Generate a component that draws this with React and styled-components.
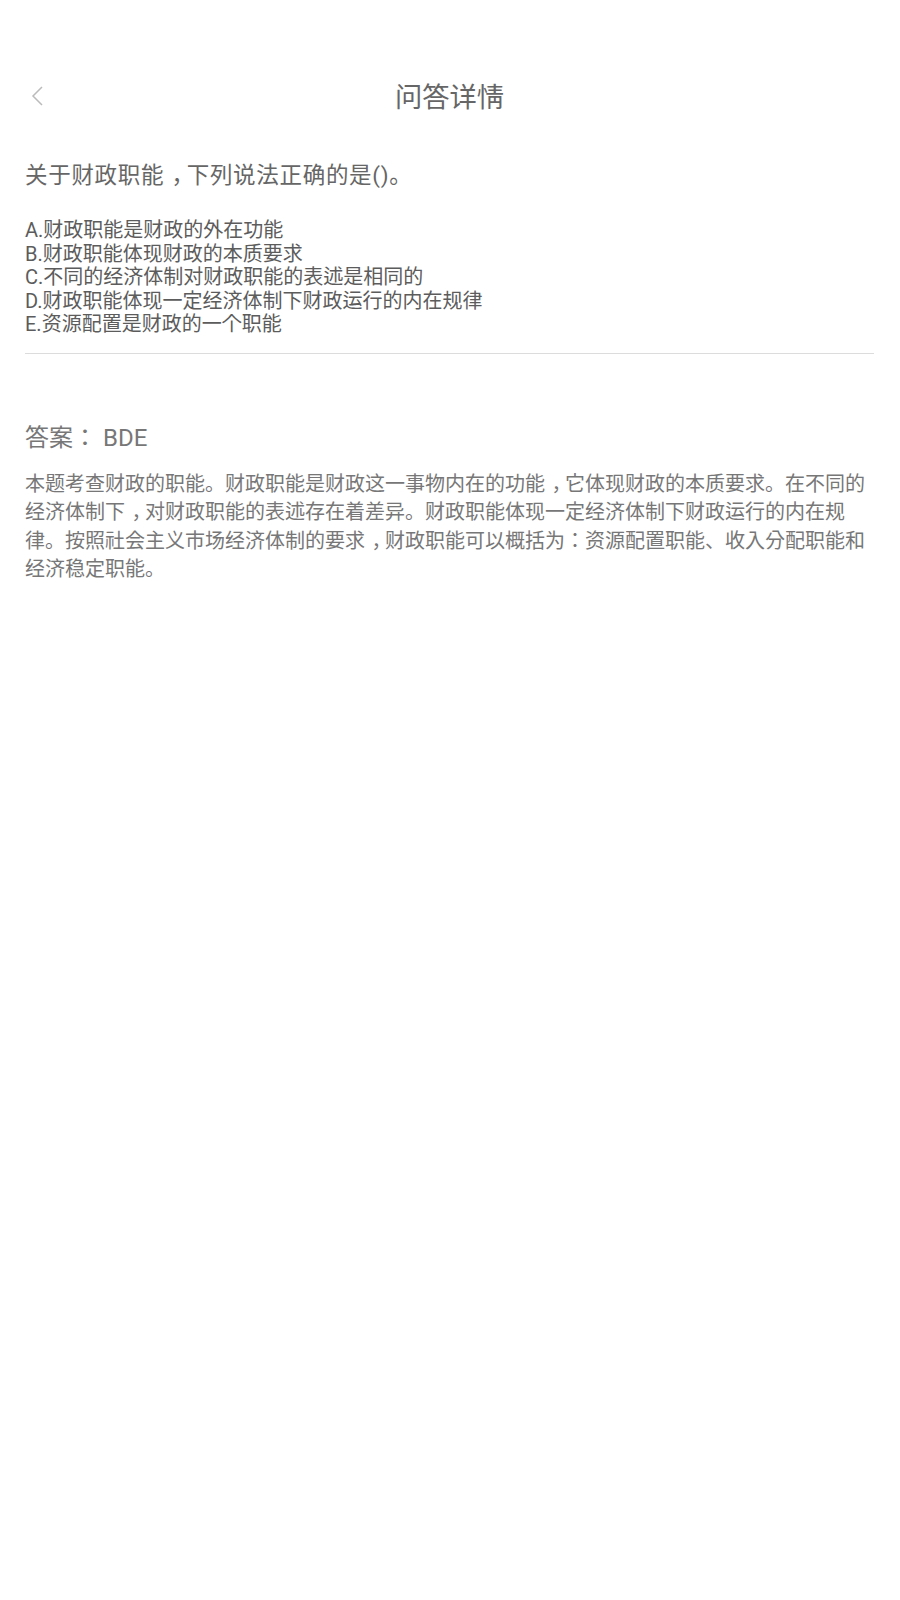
import React from "react";
import styled, { createGlobalStyle } from "styled-components";

const Global = createGlobalStyle`
  html, body { margin: 0; padding: 0; background: #ffffff; }
  body { font-family: Roboto, "Noto Sans CJK KR", sans-serif; }
`;

const Page = styled.div`
  width: 100%;
  background: #fff;
  box-sizing: border-box;
  padding: 0 26px 40px 25px;
  color: #666;
`;

const Header = styled.header`
  display: grid;
  grid-template-columns: 40px 1fr 40px;
  align-items: start;
  padding-top: 79px;
`;

const Back = styled.button`
  border: 0;
  background: none;
  padding: 0;
  margin: 7px 0 0 6px;
  width: 12px;
  height: 20px;
  display: flex;
  align-items: center;
  cursor: pointer;
`;

const Title = styled.h1`
  margin: 0;
  text-align: center;
  font-size: 27.3px;
  font-weight: 400;
  line-height: 38px;
  color: #666;
`;

const Question = styled.div`
  font-size: 22.5px;
  letter-spacing: 0.7px;
  line-height: 30px;
  margin-top: 43px;
  color: #666;
`;

const Options = styled.div`
  margin-top: 29px;
  padding-bottom: 16px;
  border-bottom: 1px solid #dcdcdc;
`;

const Option = styled.div`
  font-size: 20px;
  line-height: 23.5px;
  color: #5c5c5c;
`;

const Answer = styled.div`
  margin-top: 69px;
  font-size: 24px;
  line-height: 30px;
  color: #777;
`;

const Explain = styled.p`
  margin: 17px 0 0;
  font-size: 20px;
  line-height: 28.5px;
  color: #777;
`;

const Comma = styled.span`
  padding-left: 0.32em;
  letter-spacing: -0.32em;
`;

const withCommas = (text) =>
  text.split("，").flatMap((part, i) =>
    i === 0 ? [part] : [<Comma key={i}>，</Comma>, part]
  );

const options = [
  "A.财政职能是财政的外在功能",
  "B.财政职能体现财政的本质要求",
  "C.不同的经济体制对财政职能的表述是相同的",
  "D.财政职能体现一定经济体制下财政运行的内在规律",
  "E.资源配置是财政的一个职能",
];

const explanation =
  "本题考查财政的职能。财政职能是财政这一事物内在的功能，它体现财政的本质要求。在不同的经济体制下，对财政职能的表述存在着差异。财政职能体现一定经济体制下财政运行的内在规律。按照社会主义市场经济体制的要求，财政职能可以概括为：资源配置职能、收入分配职能和经济稳定职能。";

export default function App() {
  return (
    <>
      <Global />
      <Page>
        <Header>
          <Back aria-label="返回">
            <svg width="12" height="20" viewBox="0 0 12 20">
              <path d="M11 1 L2 10 L11 19" fill="none" stroke="#bbb" strokeWidth="1.5" />
            </svg>
          </Back>
          <Title>问答详情</Title>
          <span />
        </Header>
        <Question>{withCommas("关于财政职能，下列说法正确的是()。")}</Question>
        <Options>
          {options.map((o) => (
            <Option key={o}>{o}</Option>
          ))}
        </Options>
        <Answer>答案： BDE</Answer>
        <Explain>{withCommas(explanation)}</Explain>
      </Page>
    </>
  );
}
